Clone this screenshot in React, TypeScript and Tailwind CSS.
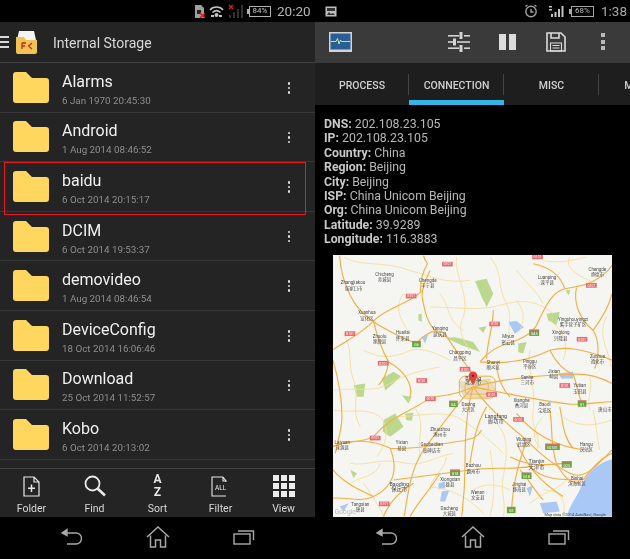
import React from 'react';

const folders = [
  { name: 'Alarms', date: '6 Jan 1970 20:45:30' },
  { name: 'Android', date: '1 Aug 2014 08:46:52' },
  { name: 'baidu', date: '6 Oct 2014 20:15:17' },
  { name: 'DCIM', date: '6 Oct 2014 19:53:37' },
  { name: 'demovideo', date: '1 Aug 2014 08:46:54' },
  { name: 'DeviceConfig', date: '18 Oct 2014 16:06:46' },
  { name: 'Download', date: '25 Oct 2014 11:52:57' },
  { name: 'Kobo', date: '6 Oct 2014 20:13:02' },
];

const info = [
  ['DNS:', '202.108.23.105'],
  ['IP:', '202.108.23.105'],
  ['Country:', 'China'],
  ['Region:', 'Beijing'],
  ['City:', 'Beijing'],
  ['ISP:', 'China Unicom Beijing'],
  ['Org:', 'China Unicom Beijing'],
  ['Latitude:', '39.9289'],
  ['Longitude:', '116.3883'],
];

const roads = [
  'M28 15 C30 60 40 95 60 135 C75 165 90 185 130 215 C170 240 215 262 258 280 C290 245 320 232 345 250 C365 285 395 325 428 372',
  'M8 298 C50 270 95 250 130 212 C170 172 235 160 272 125 C268 95 280 60 292 40 C285 30 282 22 280 15',
  'M130 215 C140 255 155 300 175 335 C172 360 165 385 145 405',
  'M8 330 C25 390 35 450 35 500 C35 540 20 580 15 610',
  'M450 335 C478 300 505 290 530 280 C570 268 600 255 620 225 C650 160 668 125 705 115 C745 108 790 105 835 60 L847 45',
  'M740 112 C732 150 742 200 790 240 C810 270 808 320 795 355',
  'M450 335 C520 342 590 335 660 300 C700 290 750 290 847 330',
  'M430 410 C520 385 640 375 730 372 C780 370 820 385 847 400',
  'M430 410 C530 430 620 450 720 462 C770 465 810 455 847 455',
  'M430 410 C470 470 530 520 590 570 C620 600 660 640 720 670 C760 690 790 660 847 600',
  'M430 410 C410 470 405 550 405 640 C405 700 400 760 395 800',
  'M430 410 C380 460 340 520 280 600 C240 660 232 740 222 800',
  'M430 410 C360 445 320 430 290 450 C230 490 180 500 130 560 C90 580 50 570 8 590',
  'M8 590 C60 565 130 570 180 595 C260 600 330 580 400 572 C430 565 445 560 455 540',
  'M180 595 C205 660 190 710 130 740 C90 760 50 740 8 745',
  'M190 690 C270 680 340 670 420 660 C480 650 540 660 600 650',
  'M590 570 C570 630 550 690 545 780',
  'M660 480 C670 540 660 580 680 640 C700 680 720 700 750 700',
  'M560 490 C600 540 660 590 770 600',
  'M240 440 C250 400 220 360 175 335',
  'M330 670 C300 720 260 760 240 800',
  'M600 650 C640 690 690 690 760 690',
  'M570 660 C600 690 610 720 640 750',
  'M705 115 C692 75 660 50 610 40',
  'M300 60 C280 100 270 130 280 160 C290 220 310 240 340 260',
  'M490 180 C490 230 470 280 470 325',
  'M790 240 C820 200 840 160 847 130',
  'M660 300 C680 340 700 360 730 372 C745 410 745 440 760 465',
  'M470 470 C440 520 430 570 420 640',
  'M540 620 C580 640 620 650 700 640',
  'M8 660 C40 700 90 720 130 740',
  'M760 690 C790 650 820 620 847 610',
  'M690 470 C700 520 700 560 730 595',
  'M160 800 C175 760 200 730 250 700',
  'M560 580 C590 640 620 690 700 740',
  'M500 350 C505 385 520 420 540 440',
];

const thinRoads = [
  'M40 20 C90 50 160 30 240 60 C310 80 350 100 420 90',
  'M300 170 C370 170 430 180 490 170 C560 150 610 140 670 190',
  'M8 420 C70 410 130 430 180 400 C230 370 280 360 330 350',
  'M200 500 C260 500 320 480 380 500 C430 530 470 560 520 610',
  'M480 600 C490 660 500 720 480 800',
  'M600 760 C650 720 690 720 720 680',
  'M60 640 C110 650 150 620 230 640 C280 650 310 620 370 610',
  'M640 30 C690 40 720 30 770 20',
  'M100 300 C140 320 180 330 240 300 C280 290 320 310 360 330',
  'M700 500 C740 530 790 530 847 510',
  'M560 60 C590 100 620 120 640 160',
  'M300 710 C360 720 400 730 460 790',
  'M100 700 C120 730 150 770 160 800',
  'M810 600 C800 550 800 520 790 480',
  'M380 20 C370 70 420 130 400 200 C380 240 400 270 420 300',
  'M480 20 C520 60 500 110 530 160 C550 200 530 240 540 270',
  'M600 300 C590 360 620 420 610 480 C600 540 640 560 620 600',
  'M8 480 C60 490 110 470 150 500 C180 530 170 580 140 620',
  'M220 130 C190 170 210 210 240 250',
  'M720 20 C700 60 760 80 800 100',
  'M660 210 C700 240 720 280 700 330',
  'M830 200 C800 260 840 300 847 360',
  'M780 380 C790 420 770 440 780 480',
  'M500 520 C540 560 530 620 520 680 C510 720 530 760 520 800',
  'M250 470 C290 510 260 560 270 620',
  'M40 250 C70 300 50 340 70 390 C90 440 60 480 90 530',
  'M640 500 C610 530 600 570 640 600',
  'M350 620 C340 670 300 680 300 720',
  'M640 720 C700 720 710 760 700 800',
  'M430 720 C460 700 500 700 540 720',
  'M150 640 C140 680 90 680 60 700',
  'M330 130 C360 170 350 210 400 240',
  'M560 150 C590 190 580 210 570 240',
];

const greens = [
  'M435 92 L470 85 L490 130 L470 170 L455 140 Z',
  'M160 510 L195 490 L220 530 L180 560 L158 545 Z',
  'M70 405 L105 400 L100 440 L80 440 Z',
  'M155 385 L190 365 L212 378 L190 400 L165 420 Z',
  'M650 190 L690 185 L680 225 L655 210 Z',
  'M345 262 L395 285 L450 305 L430 275 L380 262 Z',
  'M565 280 L590 275 L580 310 L565 305 Z',
  'M265 192 L275 190 L275 215 L265 210 Z',
  'M215 435 L245 440 L235 460 Z',
  'M60 660 L80 670 L70 685 Z',
  'M225 490 L250 488 L245 512 L228 510 Z',
  'M445 232 L470 228 L460 248 Z',
  'M708 118 L722 120 L716 135 Z',
];

const waters = [
  'M535 215 L560 212 L582 230 L555 250 Z',
  'M685 370 L730 365 L730 385 L695 385 Z',
  'M325 700 L345 695 L345 715 L325 718 Z',
  'M335 725 L358 720 L345 755 L330 755 Z',
  'M590 715 L610 705 L600 740 Z',
  'M630 760 L680 755 L690 785 L640 790 Z',
  'M275 260 L295 250 L285 280 Z',
  'M28 770 L55 760 L40 785 Z',
];

const mapLabels: [number, number, string][] = [
  [68, 97, 'Zhangjiakou'], [70, 115, '张家口市'], [163, 73, 'Chicheng'], [163, 88, '赤城县'],
  [293, 92, 'Chengde'], [293, 107, '丰宁县'], [803, 57, 'Chengde'], [803, 73, '承德市'],
  [652, 83, 'Luanping'], [652, 97, '滦平县'], [110, 187, 'Xuanhua'], [110, 205, '宣化区'],
  [218, 248, 'Huailai'], [218, 265, '怀来县'], [148, 258, 'Zhuolu'], [148, 275, '涿鹿县'],
  [330, 236, 'Yanqing'], [330, 252, '延庆县'], [390, 308, 'Changping'], [390, 325, '昌平区'],
  [535, 260, 'Miyun'], [535, 276, '密云县'], [490, 337, 'Shunyi'], [490, 353, '顺义区'],
  [600, 333, 'Pinggu'], [600, 349, '平谷区'], [672, 365, 'Jixian'], [672, 380, '蓟县'],
  [592, 382, 'Sanhe'], [592, 399, '三河市'], [750, 408, 'Yutian'], [750, 425, '玉田县'],
  [803, 318, 'Zunhua'], [803, 335, '遵化市'], [693, 246, 'Xinglong'], [693, 264, '兴隆县'],
  [730, 207, 'Yingshouyingzi'], [730, 222, '鹰手营子矿区'], [415, 463, 'Daxing'], [415, 480, '大兴区'],
  [575, 452, 'Xianghe'], [575, 468, '香河县'], [645, 465, 'Baodi'], [645, 482, '宝坻区'],
  [582, 568, 'Wuqing'], [582, 584, '武清区'], [568, 705, 'Jinghai'], [568, 720, '静海县'],
  [430, 648, 'Bazhou'], [430, 665, '霸州市'], [330, 538, 'Zhuozhou'], [330, 555, '涿州市'],
  [215, 579, 'Yixian'], [215, 596, '易县'], [305, 585, 'Gaobeidian'], [305, 603, '高碑店市'],
  [360, 688, 'Xiongxian'], [360, 705, '雄县'], [443, 727, 'Wenan'], [443, 742, '文安县'],
  [90, 765, 'Tangxian'], [90, 780, '唐县'], [358, 775, 'Dacheng'], [358, 790, '大城县'],
  [36, 577, 'Laiyuan'], [36, 593, '涞源县'], [742, 686, 'Binhai'], [742, 700, '滨海新区'],
  [770, 583, 'Hangu'], [770, 600, '汉沽区'], [826, 480, '唐山市'],
];

const bigLabels: [number, number, string][] = [
  [498, 498, 'Langfang'], [498, 515, '廊坊市'], [620, 635, 'Tianjin'], [620, 652, '天津市'],
  [207, 702, 'Baoding'], [207, 719, '保定市'], [430, 383, 'Beijing'], [430, 398, '北京市'],
];

const redShields: [number, number][] = [
  [352, 41], [623, 19], [243, 137], [59, 250], [159, 339], [275, 391], [301, 446], [405, 357],
  [485, 433], [494, 221], [785, 105], [757, 267], [705, 406], [566, 508], [135, 564], [162, 762],
];

const greenShields: [number, number, string, number][] = [
  [259, 281, 'G6', 26], [613, 247, 'G45', 30], [370, 461, 'G4', 26], [757, 460, 'G1', 26],
  [668, 590, 'G2501', 44], [375, 668, 'G18', 30], [590, 677, 'G18', 30], [711, 643, 'G25', 30],
  [544, 780, 'G3', 26],
];

const MapView = () => (
  <svg viewBox="8 15 839 785" className="block h-[262px] w-[279px] bg-[#f5f5f2]">
    {greens.map((d) => <path key={d} d={d} fill="#bcd88e" />)}
    {waters.map((d) => <path key={d} d={d} fill="#a9c8f5" />)}
    <path d="M847 628 C800 640 765 675 750 720 C735 750 715 775 712 800 L847 800 Z" fill="#a9c8f5" />
    <path d="M385 395 L480 385 L500 420 L470 445 L400 440 Z" fill="#e6dcc0" />
    {thinRoads.map((d) => <path key={d} d={d} fill="none" stroke="#f8dc95" strokeWidth="2.6" />)}
    {roads.map((d) => <path key={d} d={d} fill="none" stroke="#f5ae42" strokeWidth="3.4" />)}
    <rect x="388" y="378" width="108" height="66" rx="18" fill="none" stroke="#f5ae42" strokeWidth="3" />
    <rect x="405" y="392" width="70" height="40" rx="12" fill="none" stroke="#f5ae42" strokeWidth="2.5" />
    <g fontFamily="Roboto, 'Noto Sans CJK SC', sans-serif" textAnchor="middle">
      {mapLabels.map(([x, y, t]) => <text key={t + x} x={x} y={y + 4} fontSize="13.5" fill="#4a4a4a">{t}</text>)}
      {bigLabels.map(([x, y, t]) => <text key={t + x} x={x} y={y + 5} fontSize="16" fill="#444444">{t}</text>)}
      {redShields.map(([x, y]) => (
        <g key={`${x}-${y}`}>
          <rect x={x - 16} y={y - 7} width="32" height="14" fill="#e8696e" />
          <text x={x} y={y + 4} fontSize="10" fill="#ffffff">G101</text>
        </g>
      ))}
      {greenShields.map(([x, y, t, w]) => (
        <g key={`${x}-${y}`}>
          <rect x={x - w / 2} y={y - 9} width={w} height="19" fill="#6ba33f" />
          <rect x={x - w / 2} y={y - 9} width={w} height="3" fill="#e8696e" />
          <text x={x} y={y + 7} fontSize="11" fill="#ffffff">{t}</text>
        </g>
      ))}
      <text x="45" y="793" fontSize="20" fill="#b8b8b8">Google</text>
      <text x="736" y="797" fontSize="12" fill="#444444">Map data ©2014 AutoNavi, Google</text>
    </g>
    <path d="M429 405 C420 388 416 382 416 377 A13 13 0 0 1 442 377 C442 382 438 388 429 405 Z" fill="#e2433f" />
    <circle cx="429" cy="377" r="3.5" fill="#7a1612" />
  </svg>
);

const FolderIcon = () => (
  <svg viewBox="0 0 36 31" className="h-[31px] w-[36px] shrink-0">
    <path d="M0 3 a3 3 0 0 1 3-3 h10 l6 6 h14 a3 3 0 0 1 3 3 v19 a3 3 0 0 1-3 3 H3 a3 3 0 0 1-3-3 Z" fill="#ffd75e" />
  </svg>
);

const FileRow = ({ name, date }: { name: string; date: string }) => (
  <div className="flex h-[49.6px] items-center border-b border-[#383838] pl-[13px]">
    <FolderIcon />
    <div className="ml-[13px] flex-1 pt-[4px]">
      <div className="text-[16px] leading-[21px] text-[#f0f0f0]">{name}</div>
      <div className="mt-[2px] text-[9.8px] leading-[14px] text-[#8e8e8e]">{date}</div>
    </div>
    <div className="mr-[25px] flex flex-col items-center gap-[2px] pt-[1px]">
      <span className="h-[2.5px] w-[2.5px] rounded-full bg-[#e0e0e0]" />
      <span className="h-[2.5px] w-[2.5px] rounded-full bg-[#e0e0e0]" />
      <span className="h-[2.5px] w-[2.5px] rounded-full bg-[#e0e0e0]" />
    </div>
  </div>
);

const Tool = ({ label, children }: { label: string; children: React.ReactNode }) => (
  <div className="flex w-[63px] flex-col items-center">
    <div className="flex h-[29px] items-center justify-center text-[#e8e8e8]">{children}</div>
    <div className="mt-[1px] text-[10.5px] leading-[13px] text-[#d8d8d8]">{label}</div>
  </div>
);

const NavBar = () => (
  <div className="flex h-[42px] items-center justify-center bg-black pb-[2px] text-[#a8a8a8]">
    <svg viewBox="0 0 24 18" className="h-[18px] w-[24px]" fill="none" stroke="currentColor" strokeWidth="1.4">
      <path d="M3 5 H16 a5 5 0 0 1 0 11 H7" />
      <path d="M7 1.5 L2 5 L7 7.5 Z" fill="currentColor" />
    </svg>
    <svg viewBox="0 0 24 22" className="ml-[62px] h-[22px] w-[24px]" fill="none" stroke="currentColor" strokeWidth="1.5">
      <path d="M1 11 L12 1 L23 11 M4.5 9.5 V21 H9.5 V14 H14.5 V21 H19.5 V9.5" />
    </svg>
    <svg viewBox="0 0 22 16" className="ml-[63px] h-[16px] w-[22px]" fill="none" stroke="currentColor" strokeWidth="1.4">
      <rect x="1" y="5" width="16" height="10" />
      <path d="M5 2 H20.5 V11" />
    </svg>
  </div>
);

const StatusLeft = () => (
  <div className="flex h-[22px] items-center justify-end bg-black pr-[3px]">
    <svg viewBox="0 0 12 13" className="h-[13px] w-[12px]">
      <path d="M1 0 H7 L10 3 V13 H1 Z" fill="#a0a0a0" />
      <rect x="3" y="5" width="4" height="4" fill="#222222" />
      <path d="M6 8 L11 13 M11 8 L6 13" stroke="#e01b1b" strokeWidth="1.6" />
    </svg>
    <svg viewBox="0 0 15 13" className="ml-[3px] h-[13px] w-[15px]" fill="none" stroke="#c4c4c4" strokeWidth="1.5">
      <path d="M1 5 C4 1 11 1 14 5 M3.5 7.5 C6 5 9 5 11.5 7.5" />
      <circle cx="7.5" cy="10" r="2" fill="#c4c4c4" stroke="none" />
      <rect x="2" y="10" width="3" height="2" fill="#c4c4c4" stroke="none" />
      <rect x="10" y="10" width="3" height="2" fill="#c4c4c4" stroke="none" />
    </svg>
    <svg viewBox="0 0 16 14" className="ml-[4px] h-[14px] w-[16px]">
      <path d="M1 1 L5 5 M5 1 L1 5" stroke="#e01b1b" strokeWidth="1.5" />
      <rect x="1" y="11" width="2" height="3" fill="#333333" />
      <rect x="5" y="8" width="2" height="6" fill="#333333" />
      <rect x="9" y="5" width="2" height="9" fill="#333333" />
      <rect x="13" y="1" width="2" height="13" fill="#333333" />
    </svg>
    <div className="relative ml-[5px] flex h-[11px] w-[22px] items-center justify-center border border-[#b0b0b0] text-[8px] leading-none text-[#c8c8c8]">
      <span className="absolute left-[-3px] top-[2px] h-[5px] w-[2px] bg-[#b0b0b0]" />
      84%
    </div>
    <div className="ml-[6px] w-[35px] text-[13.5px] text-[#b4b4b4]">20:20</div>
  </div>
);

const StatusRight = () => (
  <div className="flex h-[22px] items-center bg-black pl-[10px] pr-[2px]">
    <svg viewBox="0 0 12 11" className="h-[11px] w-[12px]">
      <rect x="0.5" y="0.5" width="11" height="10" fill="#bdbdbd" />
      <rect x="2" y="2" width="8" height="3" fill="#333333" />
      <path d="M2 9 L4 6 L6 8 L8 7 L10 9 Z" fill="#333333" />
    </svg>
    <div className="flex-1" />
    <svg viewBox="0 0 14 14" className="h-[14px] w-[14px]" fill="none" stroke="#a0a0a0" strokeWidth="1.4">
      <circle cx="7" cy="7.5" r="5.2" />
      <path d="M7 5 V8 H9.5 M1.5 2.5 L3.5 1 M12.5 2.5 L10.5 1" />
    </svg>
    <svg viewBox="0 0 16 13" className="ml-[10px] h-[13px] w-[16px]" fill="#c4c4c4">
      <rect x="3" y="9" width="2" height="3" />
      <rect x="6.5" y="7" width="2" height="5" />
      <rect x="10" y="4" width="2" height="8" />
      <rect x="13.5" y="1" width="2" height="11" />
      <rect x="1" y="1" width="3" height="1.5" />
      <rect x="1" y="4" width="3" height="1.5" />
    </svg>
    <div className="relative ml-[7px] flex h-[11px] w-[23px] items-center justify-center border border-[#a8a8a8] text-[8px] leading-none text-[#b8b8b8]">
      <span className="absolute left-[-3px] top-[2px] h-[5px] w-[2px] bg-[#a8a8a8]" />
      68%
    </div>
    <div className="ml-[7px] w-[27px] text-[13.5px] text-[#a8a8a8]">1:38</div>
  </div>
);

const FilesPanel = () => (
  <div className="relative h-[559px] w-[315px] font-['Roboto',sans-serif]">
    <div className="flex h-full flex-col bg-[#242424] blur-[0.35px]">
      <StatusLeft />
      <div className="flex h-[41px] items-center border-b border-[#414141]">
        <div className="flex w-[9px] flex-col gap-[3px]">
          <span className="h-[2px] w-[9px] bg-[#d8d8d8]" />
          <span className="h-[2px] w-[9px] bg-[#d8d8d8]" />
          <span className="h-[2px] w-[9px] bg-[#d8d8d8]" />
        </div>
        <svg viewBox="0 0 21 23" className="ml-[7px] h-[23px] w-[21px]">
          <path d="M3 0 H18 L20 9 H1 Z" fill="#f4f4f4" />
          <path d="M0 6 H8 L10 9 H21 V21 a2 2 0 0 1-2 2 H2 a2 2 0 0 1-2-2 Z" fill="#f3c254" />
          <path d="M6 12 H10 M6 12 V18 M6 15 H9 M16 12 L12.5 15 L16 18" fill="none" stroke="#c8281c" strokeWidth="1.3" />
        </svg>
        <div className="ml-[16px] pt-[3px] text-[14px] text-[#d8d8d8]">Internal Storage</div>
      </div>
      <div className="h-[405px] overflow-hidden">
        {folders.map((f) => <FileRow key={f.name} name={f.name} date={f.date} />)}
      </div>
      <div className="flex h-[49px] items-center justify-between border-t border-[#414141]">
        <Tool label="Folder">
          <svg viewBox="0 0 17 21" className="h-[21px] w-[17px]" fill="none" stroke="currentColor" strokeWidth="1.2">
            <path d="M1 1 H11 L16 6 V20 H1 Z M11 1 V6 H16" />
            <path d="M8.5 8.5 V16 M5 12.2 H12" strokeWidth="1.5" />
          </svg>
        </Tool>
        <Tool label="Find">
          <svg viewBox="0 0 22 22" className="h-[22px] w-[22px]" fill="none" stroke="currentColor">
            <circle cx="8.5" cy="8.5" r="7" strokeWidth="1.8" />
            <path d="M13.5 13.5 L21 20.5" strokeWidth="2.6" />
          </svg>
        </Tool>
        <Tool label="Sort">
          <div className="flex flex-col items-center text-[12px] font-bold leading-[13px]">
            <span>A</span>
            <span>Z</span>
          </div>
        </Tool>
        <Tool label="Filter">
          <svg viewBox="0 0 20 21" className="h-[21px] w-[20px]" fill="none" stroke="currentColor" strokeWidth="1.1">
            <path d="M12 1 H1 V20 H15 M12 1 L15 5 V6 M12 1 V5 H15" />
            <text x="4" y="14" fontSize="6.5" fill="currentColor" stroke="none" fontFamily="Roboto, sans-serif">ALL</text>
          </svg>
        </Tool>
        <Tool label="View">
          <div className="grid grid-cols-3 gap-[2px]">
            {Array.from({ length: 9 }).map((_, i) => <span key={i} className="h-[6px] w-[6px] bg-[#ececec]" />)}
          </div>
        </Tool>
      </div>
      <NavBar />
    </div>
    <div className="absolute left-[4px] top-[162px] h-[53px] w-[302px] border border-[#ee1822]" />
  </div>
);

const MonitorPanel = () => (
  <div className="flex h-[559px] w-[315px] flex-col bg-black font-['Roboto',sans-serif] blur-[0.35px]">
    <StatusRight />
    <div className="flex h-[41px] items-center bg-[#3a3a3a] pb-[2px]">
      <svg viewBox="0 0 23 20" className="ml-[14px] h-[20px] w-[23px]">
        <rect width="23" height="20" fill="#d0d4d8" />
        <rect x="1.5" y="1.5" width="20" height="16" fill="#2a5f96" />
        <path d="M2 9.5 H7 L8.5 6.5 L10 12 L11.5 8 L12.5 9.5 H21" fill="none" stroke="#bfe8b0" strokeWidth="1" />
      </svg>
      <svg viewBox="0 0 22 20" className="ml-[96px] h-[20px] w-[22px]" fill="#d4d4d4">
        <rect y="3" width="11" height="1.6" /><rect x="16" y="3" width="6" height="1.6" /><rect x="11.5" y="0" width="3" height="7" />
        <rect y="9.2" width="5" height="1.6" /><rect x="9" y="9.2" width="13" height="1.6" /><rect x="5" y="6.5" width="3" height="7" />
        <rect y="15.4" width="11" height="1.6" /><rect x="16" y="15.4" width="6" height="1.6" /><rect x="11.5" y="13" width="3" height="7" />
      </svg>
      <div className="ml-[29px] flex gap-[3px]">
        <span className="h-[16px] w-[7px] bg-[#dcdcdc]" />
        <span className="h-[16px] w-[7px] bg-[#dcdcdc]" />
      </div>
      <svg viewBox="0 0 20 20" className="ml-[30px] h-[20px] w-[20px]" fill="none" stroke="#dcdcdc" strokeWidth="1.6">
        <path d="M1 1 H15 L19 5 V19 H1 Z" />
        <path d="M5 1 V6 H13 V1" />
        <path d="M4.5 11 H15.5 V19 H4.5 Z M6.5 13.5 H13.5 M6.5 16 H13.5" strokeWidth="1.1" />
      </svg>
      <div className="ml-[35px] flex flex-col gap-[2.5px]">
        <span className="h-[4px] w-[4px] bg-[#b8b8b8]" />
        <span className="h-[4px] w-[4px] bg-[#b8b8b8]" />
        <span className="h-[4px] w-[4px] bg-[#b8b8b8]" />
      </div>
    </div>
    <div className="flex h-[42px] overflow-hidden bg-[#1e1e1e] text-[10.5px] font-medium text-[#d0d0d0]">
      {['PROCESS', 'CONNECTION', 'MISC', 'MEMORY'].map((t, i) => (
        <div key={t} className={`relative flex shrink-0 items-center justify-center pt-[3px] ${i === 0 ? 'w-[94px]' : 'w-[95px]'}`}>
          {t}
          {i < 3 && <span className="absolute right-0 top-[11px] h-[21px] w-px bg-[#444444]" />}
          {i === 1 && <span className="absolute bottom-0 left-0 h-[5px] w-full bg-[#33b5e5]" />}
        </div>
      ))}
    </div>
    <div className="min-h-0 flex-1 pl-[9px] pt-[12px]">
      {info.map(([k, v]) => (
        <div key={k} className="h-[14.4px] text-[12.3px] leading-[14.4px] text-[#b8b8b8]">
          <span className="font-bold text-[#c8c8c8]">{k}</span> {v}
        </div>
      ))}
      <div className="ml-[9px] mt-[8px]">
        <MapView />
      </div>
    </div>
    <NavBar />
  </div>
);

export default function App() {
  return (
    <div className="flex h-[559px] w-[630px] overflow-hidden bg-black">
      <FilesPanel />
      <MonitorPanel />
    </div>
  );
}
